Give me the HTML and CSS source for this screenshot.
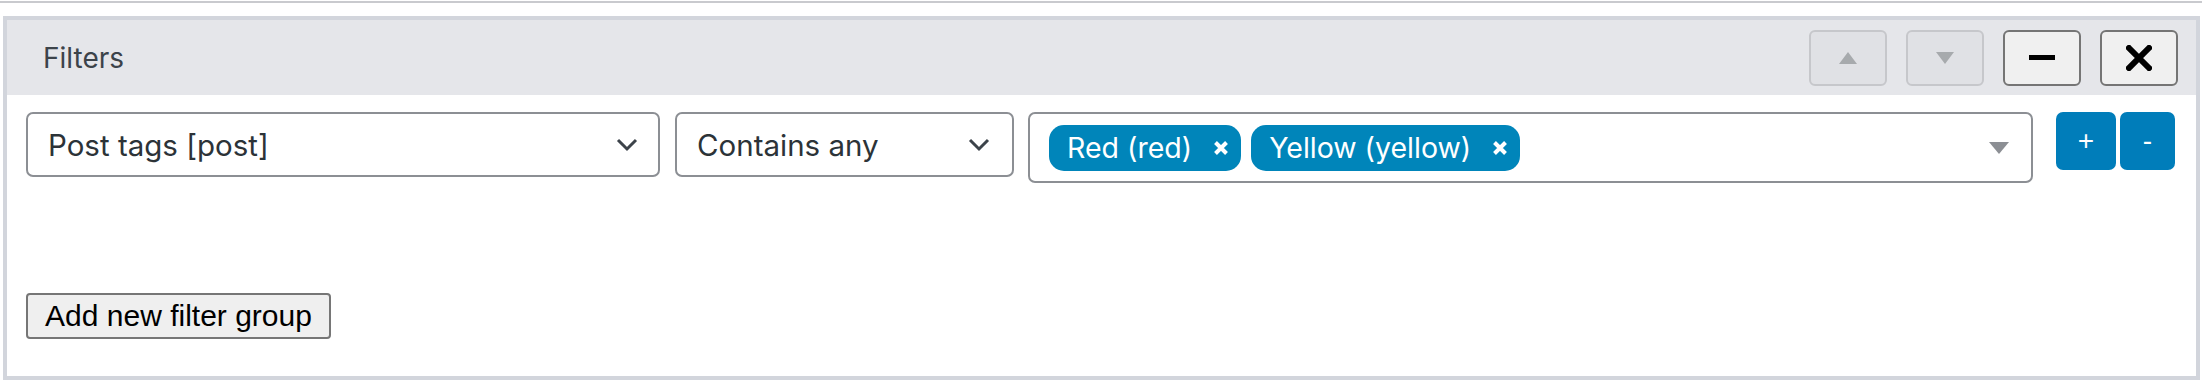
FILE: index.html
```html
<!DOCTYPE html>
<html>
<head>
<meta charset="utf-8">
<link rel="stylesheet" href="styles.css">
</head>
<body>
<div class="topline"></div>
<div class="panel">
  <div class="panel-header">
    <div class="title">Filters</div>
    <div class="tools">
      <button class="tool disabled" aria-label="Move up">
        <svg width="18" height="12" viewBox="0 0 18 12"><polygon points="9,0 18,12 0,12" fill="#a7aaad"/></svg>
      </button>
      <button class="tool disabled" aria-label="Move down">
        <svg width="18" height="12" viewBox="0 0 18 12"><polygon points="0,0 18,0 9,12" fill="#a7aaad"/></svg>
      </button>
      <button class="tool" aria-label="Collapse">
        <svg width="26" height="6" viewBox="0 0 26 6"><rect x="0" y="0" width="26" height="5" fill="#000"/></svg>
      </button>
      <button class="tool" aria-label="Remove">
        <svg width="26" height="26" viewBox="0 0 26 26"><path d="M3 3 L23 23 M23 3 L3 23" stroke="#000" stroke-width="6" stroke-linecap="square"/></svg>
      </button>
    </div>
  </div>
  <div class="panel-body">
    <div class="filter-row">
      <div class="select select-field">
        <span>Post tags [post]</span>
        <svg class="chev" width="22" height="14" viewBox="0 0 22 14"><path d="M2 2 L11 11 L20 2" fill="none" stroke="#3c434a" stroke-width="3"/></svg>
      </div>
      <div class="select select-op">
        <span>Contains any</span>
        <svg class="chev" width="22" height="14" viewBox="0 0 22 14"><path d="M2 2 L11 11 L20 2" fill="none" stroke="#3c434a" stroke-width="3"/></svg>
      </div>
      <div class="tagbox">
        <div class="chips">
          <span class="chip">Red (red)<svg class="chip-x" width="16" height="16" viewBox="0 0 16 16"><path d="M2.5 2.5 L13.5 13.5 M13.5 2.5 L2.5 13.5" stroke="#fff" stroke-width="4"/></svg></span>
          <span class="chip">Yellow (yellow)<svg class="chip-x" width="16" height="16" viewBox="0 0 16 16"><path d="M2.5 2.5 L13.5 13.5 M13.5 2.5 L2.5 13.5" stroke="#fff" stroke-width="4"/></svg></span>
        </div>
        <svg class="tri" width="20" height="12" viewBox="0 0 20 12"><polygon points="0,0 20,0 10,12" fill="#8c8f94"/></svg>
      </div>
      <div class="pm">
        <button class="pm-btn plus">+</button>
        <button class="pm-btn minus">-</button>
      </div>
    </div>
    <button class="add-group">Add new filter group</button>
  </div>
</div>
</body>
</html>
```

FILE: styles.css
```css
* { box-sizing: border-box; }
html, body { margin: 0; padding: 0; background: #fff; }
body { font-family: Inter, "Noto Sans", sans-serif; height: 382px; overflow: hidden; }

.topline { height: 2px; margin-top: 1px; background: #c9cace; }

.panel {
  margin: 13px 2px 0 3px;
  border: 4px solid #d2d5dc;
  background: #fff;
}

.panel-header {
  height: 75px;
  background: #e5e6ea;
  display: flex;
  align-items: center;
  justify-content: space-between;
  padding: 0 18px 0 36px;
}
.title { font-size: 28px; color: #3c434a; }
.tools { display: flex; gap: 19px; }
.tool {
  width: 78px; height: 56px;
  border: 2px solid #757575;
  border-radius: 6px;
  background: #f0f0f0;
  display: flex; align-items: center; justify-content: center;
  padding: 0;
}
.tool.disabled { border-color: #c6c7cb; background: #e0e1e5; }

.panel-body {
  padding: 17px 21px 37px 19px;
  display: flex;
  flex-direction: column;
  align-items: flex-start;
  gap: 110px;
}
.filter-row { display: flex; align-items: flex-start; width: 100%; }

.select {
  height: 65px;
  border: 2px solid #8c8f94;
  border-radius: 7px;
  display: flex; align-items: center; justify-content: space-between;
  padding: 0 20px 0 20px;
  font-size: 29.5px;
  color: #2c3338;
  background: #fff;
}
.select-field { width: 634px; }
.select-op { width: 339px; margin-left: 15px; padding-right: 22px; }

.tagbox {
  width: 1005px;
  height: 71px;
  margin-left: 14px;
  border: 2px solid #8c8f94;
  border-radius: 7px;
  display: flex; align-items: center; justify-content: space-between;
  padding: 0 22px 0 19px;
}
.chips { display: flex; gap: 10px; }
.chip {
  display: inline-flex; align-items: center;
  height: 46px;
  padding: 0 12px 0 18px;
  border-radius: 15px;
  background: #0085ba;
  color: #fff;
  font-size: 28.5px;
}
.chip-x { margin-left: 21px; }

.pm { display: flex; gap: 4px; margin-left: 23px; }
.pm-btn {
  height: 58px;
  border: none;
  border-radius: 7px;
  background: #007dba;
  color: #fff;
  font-family: "Liberation Sans", sans-serif;
  font-size: 28px;
  padding: 0;
}
.plus { width: 60px; }
.minus { width: 55px; }

.add-group {
  width: 305px; height: 46px;
  margin-left: 0;
  border: 2px solid #767676;
  border-radius: 4px;
  background: #efefef;
  font-family: "Liberation Sans", sans-serif;
  font-size: 30px;
  color: #000;
  padding: 0;
}
```
